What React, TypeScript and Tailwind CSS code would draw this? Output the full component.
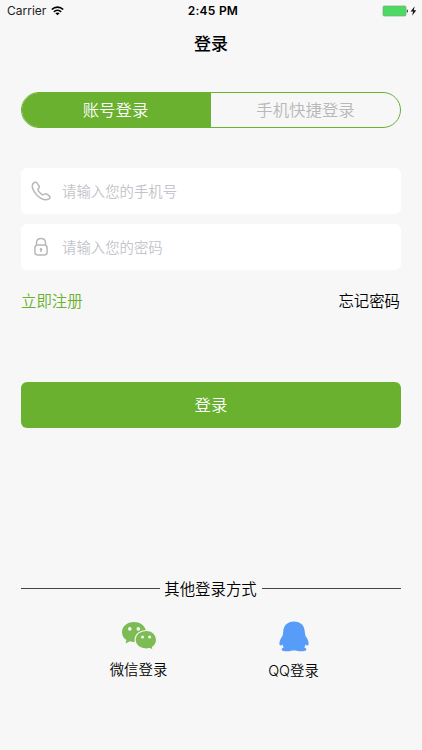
import React from 'react';

function StatusBar() {
  return (
    <div className="grid h-[22px] grid-cols-3 items-center pl-[7px] pr-[5px] text-black">
      <div className="flex items-center gap-[5px]">
        <span className="text-[12px] leading-none text-[#222]">Carrier</span>
        <svg width="13" height="10" viewBox="0 0 13 10" fill="none" stroke="#000" strokeWidth="1.7">
          <path d="M.8 3.5C4 .2 9 .2 12.2 3.5" />
          <path d="M2.9 5.8C5 3.7 8 3.7 10.1 5.8" />
          <path d="M6.5 9.3 4.4 7.2C5.6 6.1 7.4 6.1 8.6 7.2Z" fill="#000" stroke="none" />
        </svg>
      </div>
      <span className="whitespace-nowrap pl-[2px] text-center text-[12px] font-semibold leading-none tracking-[0.25px]">2:45 PM</span>
      <svg className="justify-self-end" width="35" height="12" viewBox="0 0 35 12">
        <rect x="1" y="1" width="23" height="10" rx="1.2" fill="#4cd964" stroke="#79a981" strokeWidth=".7" />
        <path d="M24.8 4.2c1.6.5 1.6 3.1 0 3.6Z" fill="#333" />
        <path d="M32.7 1.2 28.6 6.6h2.5l-1 4.2 4.2-5.6h-2.6Z" fill="#111" />
      </svg>
    </div>
  );
}

function PhoneIcon() {
  return (
    <svg width="20" height="20" viewBox="0 0 20 20" fill="none" stroke="#b8b8b8" strokeWidth="1.5" strokeLinejoin="round">
      <path d="M3.2 1.5C1.2 2.7.8 5.2 2 8.2c1.4 3.3 4.3 6.7 7.7 8.9 3.2 2 6.3 2.1 8.3.8 1.2-.8 1.3-1.8.4-2.7l-2.5-2c-1-.7-2-.5-2.7.1-.8.7-1.5.7-2.4.1-1.5-1.1-2.6-2.3-3.5-3.800-.5-.9-.4-1.600.3-2.200.7-.7.9-1.500.4-2.500L6.300 2.400C5.500 1.100 4.300.8 3.200 1.500Z" />
    </svg>
  );
}

function LockIcon() {
  return (
    <svg width="20" height="20" viewBox="0 0 20 20" fill="none" stroke="#b8b8b8" strokeWidth="1.5">
      <rect x="3.9" y="7.9" width="12.2" height="10.1" rx="2.8" />
      <path d="M5.5 8.1V6C5.5 3.2 7.2 1.6 10 1.6s4.5 1.6 4.5 4.4v2.1" />
      <circle cx="10" cy="12.2" r="1.2" fill="#b8b8b8" stroke="none" />
      <path d="M10 12v3" />
    </svg>
  );
}

function WeChatIcon() {
  return (
    <svg width="36" height="30" viewBox="0 0 36 30" fill="#7dbc55">
      <path d="M13 1C6 1 1 5.5 1 11.2c0 3.2 1.6 5.9 4.4 7.8L4.6 22.5l4.3-2.2c1.3.4 2.7.6 4.1.6 7 0 12-4.3 12-9.7C25 5.5 20 1 13 1Z" />
      <path d="M25.2 9.5C18.9 9.5 14.1 13.5 14.1 18.8S18.9 28 25.2 28c1.3 0 2.5-.2 3.7-.5l3.3 1.7-.8-3c2.6-1.7 4.1-4.4 4.1-7.5C35.5 13.4 31.2 9.5 25.2 9.5Z" stroke="#f7f7f7" strokeWidth="1.1" />
      <g fill="#f7f7f7">
        <circle cx="8.8" cy="7.9" r="1.8" />
        <circle cx="17.3" cy="7.9" r="1.8" />
        <circle cx="21.5" cy="16" r="1.5" />
        <circle cx="28.6" cy="16" r="1.5" />
      </g>
    </svg>
  );
}

function QQIcon() {
  return (
    <svg width="30" height="31" viewBox="0 0 30 31" fill="#569cf8">
      <path d="M15 .5C8.5.5 4.3 4.6 4.2 11c0 1.5-.4 2.7-.7 4.1C1.700 17.500.4 20.300.4 22.600c0 1.700.7 2.200 1.500 1.900.6-.2 1.100-.5 1.600-1 .2 1 .6 2 1.200 2.900-1.500.5-2.300 1.400-2 2.500.6 1.500 6.300 1.900 9.500.9 1.800-.5 3.800-.5 5.600 0 3.200 1 8.900.6 9.500-.9.3-1.100-.5-2-2-2.500.6-.9 1-1.900 1.200-2.900.5.500 1 .8 1.600 1 .8.300 1.500-.2 1.500-1.900 0-2.300-1.300-5.100-3.100-7.500-.3-1.400-.7-2.600-.7-4.100C25.700 4.600 21.500.5 15 .5Z" />
    </svg>
  );
}

function Field({ icon, placeholder }: { icon: React.ReactNode; placeholder: string }) {
  return (
    <label className="flex h-[46px] items-center gap-[11px] rounded-[6px] bg-white pl-[10px]">
      {icon}
      <input
        placeholder={placeholder}
        className="h-full min-w-0 flex-1 bg-transparent text-[14.4px] font-[350] outline-none placeholder:text-[#c3c3c9]"
      />
    </label>
  );
}

export default function App() {
  return (
    <div className="flex h-[750px] w-[422px] flex-col overflow-hidden bg-[#f7f7f7] font-['Inter','Noto_Sans_CJK_SC',sans-serif] text-black">
      <StatusBar />
      <h1 className="mt-[10px] text-center text-[17px] font-medium leading-6">登录</h1>

      <main className="flex flex-col px-[21px]">
        <div className="mt-[36px] grid h-[36px] grid-cols-2 overflow-hidden rounded-full border border-[#69b12f] text-[16.4px]">
          <button className="bg-[#69b12f] pr-[2px] pt-px font-[350] text-white">账号登录</button>
          <button className="pt-px font-[350] text-[#b8b8b8]">手机快捷登录</button>
        </div>

        <div className="mt-[40px] flex flex-col gap-[10px]">
          <Field icon={<PhoneIcon />} placeholder="请输入您的手机号" />
          <Field icon={<LockIcon />} placeholder="请输入您的密码" />
        </div>

        <div className="mt-[20px] flex h-6 items-center justify-between text-[15.4px] font-[350]">
          <button className="text-[#69b12f]">立即注册</button>
          <button className="pr-px">忘记密码</button>
        </div>

        <button className="mt-[68px] h-[46px] rounded-[6px] bg-[#69b12f] pt-px text-[16.4px] font-[350] text-white">登录</button>

        <div className="mt-[148px] flex h-6 items-center gap-[5px] text-[15.4px] font-[350]">
          <span className="h-px flex-1 bg-[#444]" />
          <span className="-ml-px pt-[3px]">其他登录方式</span>
          <span className="h-px flex-1 bg-[#444]" />
        </div>
      </main>

      <div className="mt-[21px] flex justify-center gap-[100px] pl-[7px] text-[14.4px] font-[350]">
        <button className="flex w-[58px] flex-col items-center gap-[9px] whitespace-nowrap leading-5">
          <WeChatIcon />
          <span>微信登录</span>
        </button>
        <button className="flex w-[52px] flex-col items-center gap-[9px] whitespace-nowrap leading-5">
          <QQIcon />
          <span>QQ登录</span>
        </button>
      </div>
    </div>
  );
}
